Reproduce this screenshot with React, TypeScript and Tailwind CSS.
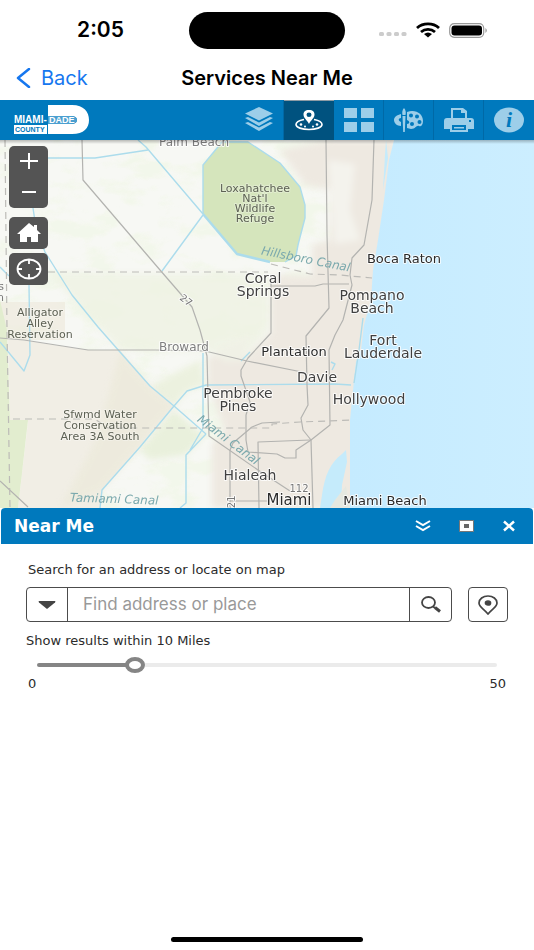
import { useState } from "react";
import type { ReactNode } from "react";

type Tone = "city" | "town" | "area" | "small";
type Label = { x: number; y: number; lines: string[]; gap?: number; tone?: Tone };

const labels: Label[] = [
  { x: 404, y: 263, lines: ["Boca Raton"] },
  { x: 263, y: 283, lines: ["Coral", "Springs"], gap: 13, tone: "town" },
  { x: 372, y: 300, lines: ["Pompano", "Beach"], gap: 13, tone: "town" },
  { x: 383, y: 345, lines: ["Fort", "Lauderdale"], gap: 13, tone: "town" },
  { x: 294, y: 356, lines: ["Plantation"] },
  { x: 317, y: 382, lines: ["Davie"], tone: "town" },
  { x: 369, y: 404, lines: ["Hollywood"], tone: "town" },
  { x: 238, y: 398, lines: ["Pembroke", "Pines"], gap: 13, tone: "town" },
  { x: 250, y: 480, lines: ["Hialeah"], tone: "town" },
  { x: 385, y: 505, lines: ["Miami Beach"] },
  { x: 255, y: 192, lines: ["Loxahatchee", "Nat'l", "Wildlife", "Refuge"], gap: 10, tone: "area" },
  { x: 40, y: 316, lines: ["Alligator", "Alley", "Reservation"], gap: 11, tone: "area" },
  { x: 100, y: 418, lines: ["Sfwmd Water", "Conservation", "Area 3A South"], gap: 11, tone: "area" },
  { x: 184, y: 351, lines: ["Broward"], tone: "small" },
  { x: 194, y: 146, lines: ["Palm Beach"], tone: "small" },
];

const tones: Record<Tone, string> = {
  city: "text-[13px] fill-[#2b2b2b]",
  town: "text-[14px] fill-[#404040]",
  area: "text-[11px] fill-[#5d6154]",
  small: "text-[12px] fill-[#808080]",
};

function AreaMap() {
  return (
    <svg
      viewBox="0 140 534 368"
      preserveAspectRatio="xMidYMid slice"
      className="block h-full w-full font-['DejaVu_Sans',sans-serif]"
      role="img"
      aria-label="Map of Miami-Dade and Broward"
    >
      <defs>
        <filter id="terrain" x="0" y="0" width="100%" height="100%">
          <feTurbulence type="fractalNoise" baseFrequency="0.025 0.05" numOctaves="4" seed="8" />
          <feColorMatrix values="0 0 0 0 0.89  0 0 0 0 0.93  0 0 0 0 0.82  5 0 0 0 -2.4" />
        </filter>
        <filter id="soften" x="-10%" y="-10%" width="120%" height="120%" colorInterpolationFilters="sRGB">
          <feGaussianBlur stdDeviation="3" />
        </filter>
        <linearGradient id="sea" x1="0" x2="1" y1="0" y2="0">
          <stop offset="0" stopColor="#c5ebff" />
          <stop offset="1" stopColor="#cceeff" />
        </linearGradient>
      </defs>
      <rect y="140" width="534" height="368" fill="#f7f8f4" />
      <rect y="140" width="380" height="368" filter="url(#terrain)" opacity="0.8" />
      <g filter="url(#soften)">
        <path d="M50 274H268V330L248 352 120 350Z" fill="#edf2e2" opacity="0.75" />
        <path d="M150 386L200 360 205 384 187 391 174 406Z" fill="#ecf1df" />
        <path d="M174 410L204 436 186 455 150 460 140 450Z" fill="#e9f0dc" />
        <path d="M280 150L330 140H395V508H212V445L225 430 208 385V356H247L271 332V275L312 276 312 245 330 240V190L305 185Z" fill="#eee9e1" />
        <path d="M328 160L355 164 350 210 360 240 335 244Z" fill="#f4f3ed" />
        <path d="M212 352L250 335 245 361 225 362Z" fill="#f0f1e6" />
      </g>
      <path d="M0 302H65V340H0Z" fill="#eeeadd" opacity="0.7" />
      <path d="M8 338L88 350H120L150 386 174 406 102 490 100 508H18L28 422 10 420Z" fill="#f1eee5" />
      <path d="M120 352L150 386 174 406 102 490 60 508 96 440Z" fill="#ebe9d8" opacity="0.6" filter="url(#soften)" />
      <path d="M0 300L7 330 10 420H28L18 508H0Z" fill="#e2edcf" />
      <path d="M394 140L389 160 384 200 378 240 373 270 371 300 364 325 361 350 356 362 353 390 350 420 350 508H534V140Z" fill="url(#sea)" />
      <path d="M386 140L388 158 383 190 385 155Z" fill="#c5ebfb" />
      <path d="M342 454C330 463 325 475 322 495L320 508H341L342 485 347 462 346 450Z" fill="#c5ebfb" />
      <path d="M335 500L346 486 350 508H330Z" fill="#e5e8e0" />
      <path d="M203 165L222 142H248L280 163 300 187 305 205V218L298 245 296 256 285 262H270L237 254 203 214Z" fill="#d5e5bc" />
      <g fill="none" stroke="#acdcec" strokeWidth="1.4" strokeLinejoin="round">
        <path d="M203 214V165L222 142H248L280 163 300 187 305 205V218L298 245 296 256 285 262" />
        <path d="M138 140L146 147 203 214" />
        <path d="M203 214L237 254 270 262" strokeWidth="2.5" />
        <path d="M48 158H95L148 150M203 215L162 271" />
        <path d="M33 208L36 228 45 252 72 295 98 327 120 352 150 386 174 406 206 434" />
        <path d="M29 285L30 355 24 371 0 342M0 267L9 276" />
        <path d="M351 385L335 384 206 385 187 391 174 406 140 447 102 490 100 508" />
        <path d="M203 353V428L190 450M206 434L186 455V503L180 508M241 361L250 352" />
        <path d="M363 318L359 350 354 383M331 362L335 364 332 370" />
      </g>
      <g fill="none" stroke="#b3b3b0" strokeWidth="1.2" strokeLinejoin="round">
        <path d="M82 140L83 180 160 270 192 307 200 330 207 356 209 436 258 470 290 491" />
        <path d="M0 338L24 340 88 350H155L205 351 247 361 307 373" />
        <path d="M326 140L327 235 329 308 306 336 307 385 308 405 301 418 303 430 311 440 313 508" />
        <path d="M374 140L372 200 364 245 352 258 350 275 352 285 343 320 335 335 329 350 330 425 311 440 296 450V458H285L277 454 248 452 246 440V415L250 402 241 376 241 370 248 358 271 333V275" />
        <path d="M271 286H315L323 284H349M259 508L258 442 310 440M230 508V450L233 443 252 427 262 423 280 422M230 501H268M0 481L28 507" />
      </g>
      <g fill="none" stroke="#bcbbb7" strokeWidth="1.2" strokeDasharray="7 5">
        <path d="M5 140L7 330 10 508M48 272H268M271 264L310 274 340 275 372 278" />
        <path d="M13 419H95L108 428H272V424L300 422 352 420" />
      </g>
      <g textAnchor="middle" stroke="#ffffff" strokeOpacity="0.8" strokeWidth="2" strokeLinejoin="round" paintOrder="stroke">
        {labels.map((label) => (
          <text key={label.lines[0]} className={tones[label.tone ?? "city"]} strokeOpacity={label.tone === "area" ? 0.3 : 0.8}>
            {label.lines.map((line, i) => (
              <tspan key={line} x={label.x} y={label.y + i * (label.gap ?? 0)}>
                {line}
              </tspan>
            ))}
          </text>
        ))}
        <text x="289" y="505" className="fill-[#2b2b2b] text-[15px]">Miami</text>
        <text x="299" y="492" className="fill-[#777777] text-[10px]">112</text>
        <text x="0" y="0" transform="translate(235 505) rotate(-90)" className="fill-[#777777] text-[10px]">821</text>
        <text x="0" y="0" transform="translate(184 303) rotate(38)" className="fill-[#777777] text-[10px]">27</text>
      </g>
      <g textAnchor="end" className="fill-[#777777] text-[11px]">
        <text x="4" y="290">s</text>
        <text x="4" y="301">n</text>
      </g>
      <g textAnchor="middle" className="fill-[#7ba9ad] text-[12px] italic">
        <text x="0" y="0" transform="translate(305 263) rotate(11)">Hillsboro Canal</text>
        <text x="0" y="0" transform="translate(226 443) rotate(37)">Miami Canal</text>
        <text x="0" y="0" transform="translate(114 503) rotate(2)">Tamiami Canal</text>
      </g>
    </svg>
  );
}

function MiamiDadeLogo() {
  return (
    <svg viewBox="0 0 76 30" className="h-[30px] w-[76px]" role="img" aria-label="Miami-Dade County">
      <path d="M34 0H58C70 0 75 7 75 15S70 29 58 29H34V19H57C61 19 63 17 63 15S61 11 57 11H34Z" fill="#ffffff" />
      <rect x="0" y="20" width="33" height="9" fill="#ffffff" />
      <path d="M34 11H57Q63 11 63 15T57 19H34Z" fill="#4b9fd0" />
      <g className="font-['Liberation_Sans',sans-serif] font-bold">
        <text x="0" y="18" fill="#ffffff" className="text-[10px]">MIAMI-</text>
        <text x="35" y="18" fill="#ffffff" className="text-[9px]">DADE</text>
        <text x="1" y="27" fill="#0079bd" className="text-[7px]">COUNTY</text>
      </g>
    </svg>
  );
}

function ToolIcon({ children }: { children: ReactNode }) {
  return (
    <svg viewBox="0 0 32 28" className="h-7 w-8" fill="currentColor" aria-hidden="true">
      {children}
    </svg>
  );
}

const tools: { name: string; icon: ReactNode }[] = [
  {
    name: "Layers",
    icon: (
      <ToolIcon>
        <path d="M16 1L30 7.500 16 14.500 2 7.500Z" />
        <path d="M2 12L5 11 16 16.500 27 11 30 12 16 20Z" />
        <path d="M2 17L5 16 16 21.500 27 16 30 17 16 25Z" />
      </ToolIcon>
    ),
  },
  {
    name: "Near Me",
    icon: (
      <ToolIcon>
        <path fillRule="evenodd" d="M16 3C12 3 10.500 5 10.500 7.500C10.500 11 14 13 16 17C18 13 21.500 11 21.500 7.500C21.500 5 20 3 16 3ZM16 5.500A2.500 2.200 0 1 1 16 9.900A2.500 2.200 0 0 1 16 5.500Z" />
        <path d="M11 12.500C6 13.500 3 15.500 3 17.500C3 20.500 9 22.500 16 22.500S29 20.500 29 17.500C29 15.500 26 13.500 21 12.500" fill="none" stroke="currentColor" strokeWidth="1.600" />
        <circle cx="8" cy="17.500" r="1.300" /><circle cx="24" cy="17.500" r="1.300" /><circle cx="12" cy="19.500" r="1" /><circle cx="20" cy="19.500" r="1" />
      </ToolIcon>
    ),
  },
  {
    name: "Basemaps",
    icon: (
      <ToolIcon>
        <path d="M1 2H14V12H1ZM18 2H31V12H18ZM1 16H14V26H1ZM18 16H31V26H18Z" />
      </ToolIcon>
    ),
  },
  {
    name: "Draw",
    icon: (
      <ToolIcon>
        <path d="M11 2Q13.500 5 12.500 9H9.500Q8.500 5 11 2ZM9.500 10H12.500L11.800 26H10.200Z" />
        <path d="M8 8V12C5 12 5 15 8 16V20C4 20 1 17 1 14S4 9 8 8Z" />
        <path fillRule="evenodd" d="M14 6C23 3 30 8 30 15C30 19 28 21 26 20C23 19 23 23 18 23L14 22V18C17 18 17 15 14 14ZM18 7.500A2 2 0 1 0 18 11.500A2 2 0 0 0 18 7.500ZM24 8.500A2 2 0 1 0 24 12.500A2 2 0 0 0 24 8.500ZM26.500 14A2 2 0 1 0 26.500 18A2 2 0 0 0 26.500 14ZM19 16A2 2 0 1 0 19 20A2 2 0 0 0 19 16Z" />
      </ToolIcon>
    ),
  },
  {
    name: "Print",
    icon: (
      <ToolIcon>
        <path fillRule="evenodd" d="M8 2H20L24 5V12H28Q31 12 31 15V23H25V26H7V23H1V15Q1 12 4 12H8ZM10 4V12H22V7H18V4ZM9 19V24H23V19ZM26 14V16H28V14Z" />
        <path d="M11 21H21V22.500H11Z" />
      </ToolIcon>
    ),
  },
  {
    name: "About",
    icon: (
      <ToolIcon>
        <ellipse cx="16" cy="14" rx="15" ry="12.500" />
        <text x="16" y="21" textAnchor="middle" fill="#0079bd" className="font-['Liberation_Serif',serif] text-[22px] font-bold italic">i</text>
      </ToolIcon>
    ),
  },
];

const mapButton = "flex w-[39px] items-center justify-center bg-[#545454] text-white";

export default function App() {
  const [radius, setRadius] = useState(10);
  const filled = (radius / 50) * 100;

  return (
    <div className="flex min-h-screen flex-col bg-white font-['DejaVu_Sans',sans-serif] text-[#2b2b2b]">
      <div className="grid h-[60px] grid-cols-[1fr_156px_1fr] items-center font-[Inter,sans-serif]">
        <span className="pl-3 text-center text-[21px] font-semibold text-black">2:05</span>
        <div className="h-[37px] rounded-full bg-black" />
        <div className="flex items-center gap-2 pl-[34px]">
          <svg viewBox="0 0 28 4" className="mt-2 h-1 w-7" fill="#cccccc" aria-hidden="true">
            <rect width="5" height="4" rx="1.500" /><rect x="7.500" width="5" height="4" rx="1.500" /><rect x="15" width="5" height="4" rx="1.500" /><rect x="22.500" width="5" height="4" rx="1.500" />
          </svg>
          <svg viewBox="0 0 26 16" className="h-4 w-[26px]" fill="none" stroke="#000000" strokeWidth="2.800" aria-hidden="true">
            <path d="M2 6C8 0.500 18 0.500 24 6M6 10C10 6.500 16 6.500 20 10" />
            <path d="M9 12Q13 9 17 12L13 15.500Z" fill="#000000" stroke="none" />
          </svg>
          <svg viewBox="0 0 39 15" className="h-[15px] w-[39px]" aria-hidden="true">
            <rect x="0.700" y="0.700" width="34" height="13.600" rx="4.500" fill="none" stroke="#999999" strokeWidth="1.200" />
            <rect x="2.500" y="2.500" width="30.500" height="10" rx="3" />
            <path d="M36.500 5Q39 7.500 36.500 10Z" fill="#888888" />
          </svg>
        </div>
      </div>

      <header className="grid h-10 grid-cols-[1fr_auto_1fr] items-center pb-[5px] font-[Inter,sans-serif]">
        <button type="button" className="flex items-center gap-[10px] pl-4 text-[20px] leading-6 text-[#1677ef]">
          <svg viewBox="0 0 15 20" className="h-5 w-[15px]" fill="none" stroke="currentColor" strokeWidth="2.500" strokeLinecap="round" strokeLinejoin="round" aria-hidden="true">
            <path d="M13 1L2 10 13 19" />
          </svg>
          Back
        </button>
        <h1 className="text-[20px] leading-6 font-semibold text-black">Services Near Me</h1>
      </header>

      <nav className="flex h-10 items-center justify-between bg-[#0079bd] pl-[14px]">
        <MiamiDadeLogo />
        <div className="flex h-full">
          {tools.map((tool, i) => (
            <button
              key={tool.name}
              type="button"
              aria-label={tool.name}
              className={
                i === 1
                  ? "flex w-[50px] items-center justify-center border-t border-[#8d9ba5] bg-[#00527f] text-white"
                  : "flex w-[50px] items-center justify-center border-r border-[#0069a6] text-[#9dcee9] last:border-r-0"
              }
            >
              {tool.icon}
            </button>
          ))}
        </div>
      </nav>

      <main className="relative h-[368px] overflow-hidden">
        <AreaMap />
        <div className="absolute inset-x-0 top-0 h-1 bg-linear-to-b from-black/25 to-transparent" />
        <div className="absolute top-[6px] left-[9px] flex flex-col gap-[9px]">
          <div className="flex flex-col overflow-hidden rounded-[5px]">
            <button type="button" aria-label="Zoom in" className={`${mapButton} h-[31px]`}>
              <svg viewBox="0 0 20 18" className="h-[18px] w-5" stroke="currentColor" strokeWidth="2" aria-hidden="true"><path d="M1 8H19M10 0V16" /></svg>
            </button>
            <button type="button" aria-label="Zoom out" className={`${mapButton} h-[31px]`}>
              <svg viewBox="0 0 20 18" className="h-[18px] w-5" stroke="currentColor" strokeWidth="2" aria-hidden="true"><path d="M3 8H17" /></svg>
            </button>
          </div>
          <div className="flex flex-col gap-1">
            <button type="button" aria-label="Home" className={`${mapButton} h-8 rounded-[5px]`}>
              <svg viewBox="0 0 24 20" className="h-5 w-6" fill="currentColor" aria-hidden="true"><path d="M12 0L17 4V2H20V7L24 11H21V19H14V14H10V19H3V11H0Z" /></svg>
            </button>
            <button type="button" aria-label="My location" className={`${mapButton} h-8 rounded-[5px]`}>
              <svg viewBox="0 0 26 22" className="h-[22px] w-[26px]" fill="none" stroke="currentColor" strokeWidth="1.800" aria-hidden="true">
                <ellipse cx="13" cy="11" rx="11.500" ry="9.500" /><path d="M13 2V6M13 16V20M2 11H6M20 11H24" />
              </svg>
            </button>
          </div>
        </div>
      </main>

      <section className="flex flex-1 flex-col" aria-labelledby="panel-title">
        <div className="mx-px flex h-9 items-center justify-between rounded-t bg-[#0079bd] pr-[17px] pl-[13px] text-white">
          <h2 id="panel-title" className="text-[17px] leading-6 font-bold">Near Me</h2>
          <div className="flex items-center gap-7">
            <button type="button" aria-label="Collapse">
              <svg viewBox="0 0 16 12" className="h-3 w-4" fill="none" stroke="currentColor" strokeWidth="2" aria-hidden="true"><path d="M1 1L8 5 15 1M1 6L8 10 15 6" /></svg>
            </button>
            <button type="button" aria-label="Maximize">
              <svg viewBox="0 0 15 12" className="h-3 w-[15px]" aria-hidden="true"><path d="M.5.500H14.500V11.500H.500Z" fill="#ffffff" stroke="#777777" /><path d="M5 4H10V8H5Z" fill="#666666" /></svg>
            </button>
            <button type="button" aria-label="Close">
              <svg viewBox="0 0 14 12" className="h-3 w-[14px]" fill="none" stroke="currentColor" strokeWidth="2.500" aria-hidden="true"><path d="M2 1.500L12 10.500M12 1.500L2 10.500" /></svg>
            </button>
          </div>
        </div>

        <div className="px-[26px] pt-4 text-[13px]">
          <label htmlFor="address" className="ml-0.5 block leading-5">Search for an address or locate on map</label>
          <div className="mt-[7px] flex gap-4">
            <div className="flex h-[35px] flex-1 divide-x divide-[#4c4c4c] overflow-hidden rounded border border-[#4c4c4c]">
              <button type="button" aria-label="Choose search source" className="flex w-[41px] items-center justify-center">
                <svg viewBox="0 0 18 8" className="h-2 w-[18px]" fill="#444444" aria-hidden="true"><path d="M1 0H17Q18 .5 17 1.500L9 8 1 1.500Q0 .5 1 0Z" /></svg>
              </button>
              <input id="address" type="text" placeholder="Find address or place" className="min-w-0 flex-1 px-[15px] font-[Inter,sans-serif] text-[17px] outline-none placeholder:text-[#999999]" />
              <button type="button" aria-label="Search" className="flex w-[41px] items-center justify-center">
                <svg viewBox="0 0 20 17" className="h-[17px] w-5" fill="none" stroke="#444444" aria-hidden="true"><ellipse cx="7.500" cy="6.500" rx="6.500" ry="5.500" strokeWidth="1.800" /><path d="M12 10.500L14 12" strokeWidth="1.800" /><path d="M14 11.500L19 15.500" strokeWidth="3" /></svg>
              </button>
            </div>
            <button type="button" aria-label="Locate on map" className="flex w-10 items-center justify-center rounded border border-[#4c4c4c]">
              <svg viewBox="0 0 20 20" className="h-5 w-5" fill="none" stroke="#444444" strokeWidth="1.700" aria-hidden="true"><path d="M10 1C5 1 1 4 1 8C1 12 6 14 10 19C14 14 19 12 19 8C19 4 15 1 10 1Z" /><ellipse cx="10" cy="8" rx="2.500" ry="2" fill="#444444" /></svg>
            </button>
          </div>
          <label htmlFor="radius" className="mt-[9px] block leading-5">Show results within {radius} Miles</label>
          <div className="mt-3 px-[11px]">
            <input
              id="radius"
              type="range"
              min={0}
              max={50}
              value={radius}
              onChange={(e) => setRadius(Number(e.target.value))}
              style={{ backgroundImage: `linear-gradient(to right, #858585 ${filled}%, #ebebeb ${filled}%)` }}
              className="block h-1 w-full appearance-none rounded-full [&::-webkit-slider-thumb]:h-4 [&::-webkit-slider-thumb]:w-5 [&::-webkit-slider-thumb]:appearance-none [&::-webkit-slider-thumb]:rounded-[50%] [&::-webkit-slider-thumb]:border-4 [&::-webkit-slider-thumb]:border-[#858585] [&::-webkit-slider-thumb]:bg-white"
            />
          </div>
          <div className="mt-[7px] flex justify-between px-0.5 leading-5">
            <span>0</span>
            <span>50</span>
          </div>
        </div>

        <div className="mx-auto mt-auto mb-2 h-[5px] w-[36%] rounded-full bg-black" />
      </section>
    </div>
  );
}
